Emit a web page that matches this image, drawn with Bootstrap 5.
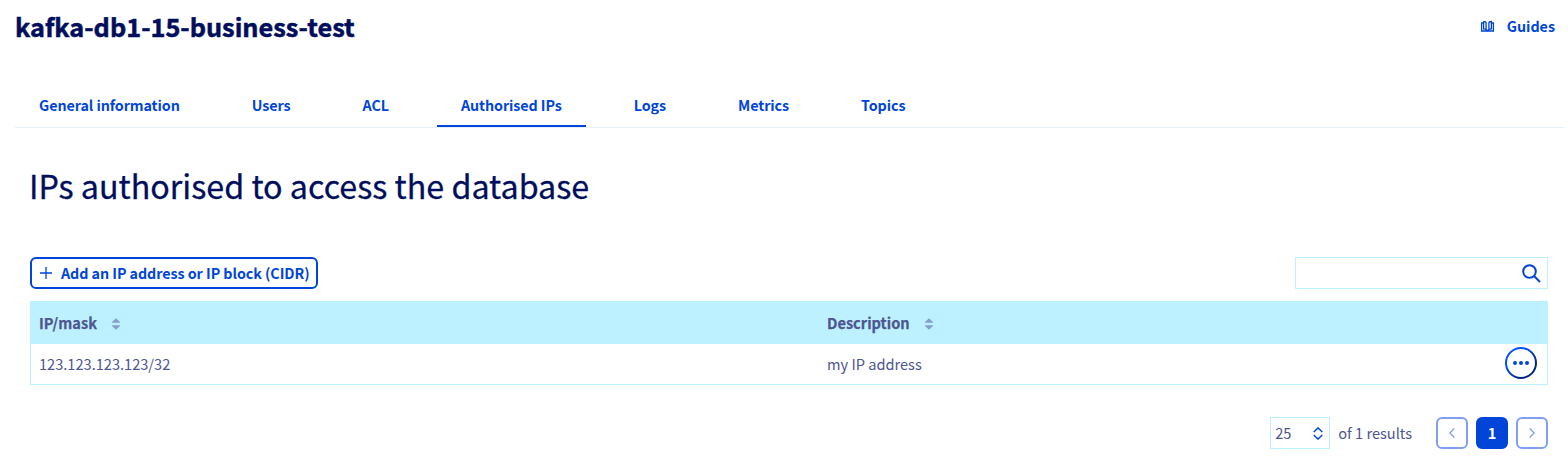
<!DOCTYPE html>
<html lang="en">
<head>
<meta charset="utf-8">
<meta name="viewport" content="width=device-width, initial-scale=1">
<title>kafka-db1-15-business-test</title>
<link rel="stylesheet" href="https://cdn.jsdelivr.net/npm/bootstrap@5.3.0/dist/css/bootstrap.min.css">
<style>
  :root { --blue: #0045d8; --navy: #000e5c; --ink: #4d5592; --pale: #bef1ff; }
  body { font-family: "Source Sans Pro", "Noto Sans CJK JP", sans-serif; font-size: 14.6px; line-height: 20px; color: var(--ink); background: #fff; overflow: hidden; }
  a { color: var(--blue); text-decoration: none; }
  svg { display: block; flex: none; }
  .service-title { font-size: 25.3px; line-height: 32px; font-weight: 700; color: var(--navy); padding: 10px 0 0 15px; -webkit-text-stroke: .5px var(--navy); }
  .guides { padding: 16px 13px 0 0; gap: 12px; font-size: 14.3px; }
  .tabs { margin: 46px 4px 0 15px; gap: 24px; height: 40px; border-bottom: 1px solid #e5f1fa; font-size: 14.3px; letter-spacing: -.08px; }
  .tabs .nav-link { padding: 7px 24px 0; height: 39px; color: var(--blue); font-weight: 700; border-bottom: 2px solid transparent; border-radius: 0; }
  .tabs .nav-link.active { border-bottom-color: var(--blue); }
  .panel { padding: 0 20px 0 30px; }
  .panel-title { font-size: 32.25px; line-height: 40px; font-weight: 400; color: var(--navy); margin: 37px 0 52px -1px; -webkit-text-stroke: .3px var(--navy); }
  .btn-add { height: 32px; width: 288px; padding: 0 0 0 8px; gap: 9px; border: 2px solid var(--blue); border-radius: 6px; color: var(--blue); font-size: 14.3px; letter-spacing: -.06px; font-weight: 700; line-height: 20px; white-space: nowrap; }
  .search { width: 253px; height: 32px; border: 1px solid var(--pale); padding-right: 6px; }
  .ip-table { margin: 12px 0 32px; border: 1px solid var(--pale); border-collapse: separate; border-spacing: 0; color: var(--ink); table-layout: fixed; }
  .ip-table th, .ip-table td { padding: 0 8px; border: 0; color: var(--ink); vertical-align: middle; }
  .ip-table th { height: 42px; background: var(--pale); font-weight: 700; -webkit-text-stroke: .25px var(--ink); }
  .ip-table th svg { margin: 2px 0 0 15px; }
  .ip-table td { height: 40px; padding-bottom: 1px; }
  .ip-table td.row-menu { padding: 0 10px 3px 0; }
  .btn-more { width: 32px; height: 32px; }
  .page-size { width: 60px; height: 32px; border: 1px solid var(--pale); padding: 0 6px 0 4px; }
  .pager { width: 32px; height: 32px; border: 2px solid #809ff0; border-radius: 6px; }
  .pager.current { background: var(--blue); border-color: var(--blue); color: #fff; font-weight: 700; }
</style>
</head>
<body>
<header class="d-flex justify-content-between align-items-start">
  <h1 class="service-title m-0"><span>kafka-db1-15-business-test</span></h1>
  <a href="#" class="guides d-flex align-items-center fw-bold">
    <svg width="15" height="12" viewBox="0 0 15 12" fill="none" stroke="#0045d8" stroke-width="1.3"><path d="M3.300 3H1.600v8h11.800V3h-1.700M3.600 1.500v7.300c1.900 0 3.200.6 3.900 2 .7-1.400 2-2 3.900-2V1.500C9.600 1.500 8.900 2.200 8.900 3.200v5.600M3.600 1.500C5.400 1.500 6.100 2.200 6.100 3.200v5.600"/></svg>
    <span>Guides</span>
  </a>
</header>
<nav class="nav tabs flex-nowrap">
  <a class="nav-link" href="#"><span>General information</span></a>
  <a class="nav-link" href="#"><span>Users</span></a>
  <a class="nav-link" href="#"><span>ACL</span></a>
  <a class="nav-link active" href="#"><span>Authorised IPs</span></a>
  <a class="nav-link" href="#"><span>Logs</span></a>
  <a class="nav-link" href="#"><span>Metrics</span></a>
  <a class="nav-link" href="#"><span>Topics</span></a>
</nav>
<main class="panel">
  <h2 class="panel-title"><span>IPs authorised to access the database</span></h2>
  <div class="d-flex justify-content-between">
    <button class="btn btn-add d-flex align-items-center" type="button">
      <svg width="12" height="12" viewBox="0 0 12 12" stroke="#0045d8" stroke-width="1.3"><path d="M6 0v12M0 6h12"/></svg>
      <span>Add an IP address or IP block (CIDR)</span>
    </button>
    <div class="search d-flex align-items-center justify-content-end">
      <svg width="19" height="19" viewBox="0 0 19 19" fill="none" stroke="#0045d8" stroke-width="2"><circle cx="7.500" cy="7.500" r="6.300"/><path d="M12 12l6 6"/></svg>
    </div>
  </div>
  <table class="table ip-table">
    <colgroup><col style="width:788px"><col><col style="width:60px"></colgroup>
    <thead>
      <tr>
        <th><div class="d-flex align-items-center"><span>IP/mask</span><svg width="8" height="12" viewBox="0 0 8 12" fill="#869fcc"><path d="M4 .2L8 4v.8H0V4zM4 11.800L8 8v-.8H0V8z"/></svg></div></th>
        <th><div class="d-flex align-items-center"><span>Description</span><svg width="8" height="12" viewBox="0 0 8 12" fill="#869fcc"><path d="M4 .2L8 4v.8H0V4zM4 11.800L8 8v-.8H0V8z"/></svg></div></th>
        <th></th>
      </tr>
    </thead>
    <tbody>
      <tr>
        <td><span>123.123.123.123/32</span></td>
        <td><span>my IP address</span></td>
        <td class="row-menu"><svg class="btn-more ms-auto" viewBox="0 0 32 32"><defs><linearGradient id="ring" x1="0" y1="0" x2="1" y2="1"><stop offset=".3" stop-color="#0050ff"/><stop offset=".75" stop-color="#00257e"/></linearGradient></defs><circle cx="16" cy="16" r="15" fill="none" stroke="url(#ring)" stroke-width="2"/><g fill="#0045d8"><circle cx="10" cy="16" r="2"/><circle cx="16" cy="16" r="2"/><circle cx="22" cy="16" r="2"/></g></svg></td>
      </tr>
    </tbody>
  </table>
  <div class="d-flex justify-content-end align-items-center">
    <div class="page-size d-flex align-items-center justify-content-between"><span>25</span>
      <svg width="10" height="13" viewBox="0 0 10 13" fill="none" stroke="#0045d8" stroke-width="1.400"><path d="M.7 5L5 .9 9.300 5M.7 8L5 12.100 9.300 8"/></svg></div>
    <span class="ms-2 me-4">of 1 results</span>
    <div class="d-flex gap-2">
      <a href="#" class="pager d-flex align-items-center justify-content-center"><svg width="6" height="10" viewBox="0 0 6 10" fill="none" stroke="#7d9fe9" stroke-width="1.300"><path d="M5.300.5L.8 5l4.500 4.500"/></svg></a>
      <a href="#" class="pager current d-flex align-items-center justify-content-center"><span>1</span></a>
      <a href="#" class="pager d-flex align-items-center justify-content-center"><svg width="6" height="10" viewBox="0 0 6 10" fill="none" stroke="#7d9fe9" stroke-width="1.300"><path d="M.7.500L5.200 5 .7 9.500"/></svg></a>
    </div>
  </div>
</main>
<script src="https://cdn.jsdelivr.net/npm/bootstrap@5.3.0/dist/js/bootstrap.bundle.min.js"></script>
</body>
</html>
